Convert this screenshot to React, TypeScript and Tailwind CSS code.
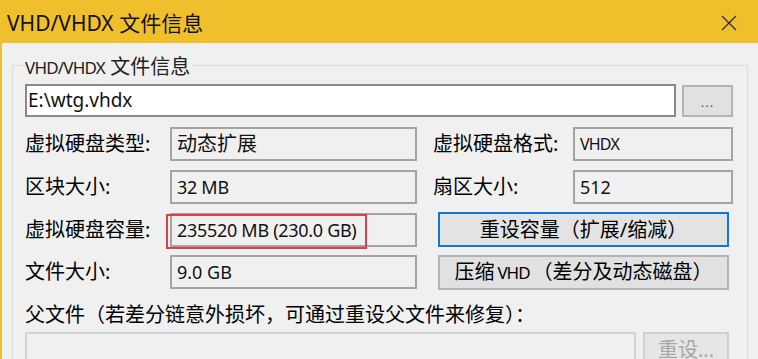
import React from "react";

const font = { fontFamily: '"Noto Sans", "Noto Sans CJK SC", sans-serif' };

function Box({ text, w, className = "" }: { text: string; w: string; className?: string }) {
  return (
    <div
      className={`${w} h-[34px] border-2 border-[#a3a3a3] bg-[#f0f0f0] flex items-center pl-[5px] text-[#111] leading-none ${className}`}
    >
      {text}
    </div>
  );
}

function Label({ text, w }: { text: string; w: string }) {
  return <div className={`${w} text-[20px] leading-[28px] text-[#000] whitespace-nowrap`}>{text}</div>;
}

export default function App() {
  return (
    <div className="w-[758px] h-[359px] overflow-hidden bg-[#f0f0f0] flex flex-col" style={font}>
      <div className="h-[43px] shrink-0 bg-[#efc02b] flex items-center justify-between pl-[7px] pr-[21px] pt-[3px]">
        <span className="text-[21px] leading-none text-[#111]">VHD/VHDX 文件信息</span>
        <svg width="16" height="16" viewBox="0 0 16 16">
          <path d="M1 1 L15 15 M15 1 L1 15" stroke="#2a2a2a" strokeWidth="1.2" fill="none" />
        </svg>
      </div>
      <div className="flex-1 border-l-2 border-[#efc02b] pl-[10px] pt-[22px]">
        <div className="relative border border-[#dcdcdc] w-[736px] h-[320px] pt-[18px] pl-[12px]">
          <div className="absolute -top-[13px] left-[10px] px-[2px] bg-[#f0f0f0] text-[20px] leading-[28px] text-[#222] whitespace-nowrap">
            <span className="text-[17px] tracking-[-0.8px]">VHD/VHDX</span> 文件信息
          </div>
          {/* path row */}
          <div className="flex items-start">
            <div className="w-[651px] h-[33px] border-2 border-[#8a8a8a] bg-white flex items-center pl-[1px] text-[19px] text-[#111] leading-none">
              E:\wtg.vhdx
            </div>
            <div className="ml-[6px] mt-[1px] w-[51px] h-[32px] border-2 border-[#b4b4b4] bg-[#e1e1e1] flex items-end justify-center pb-[6px] text-[13px] leading-none text-[#555] tracking-[1px]">
              ...
            </div>
          </div>
          {/* row 1 */}
          <div className="flex items-center h-[34px] mt-[10px]">
            <Label text="虚拟硬盘类型:" w="w-[145px]" />
            <Box text="动态扩展" w="w-[247px]" className="text-[20px]" />
            <div className="w-[16px]" />
            <Label text="虚拟硬盘格式:" w="w-[140px]" />
            <Box text="VHDX" w="w-[160px]" className="text-[16px] tracking-[-0.8px]" />
          </div>
          {/* row 2 */}
          <div className="flex items-center h-[34px] mt-[9px]">
            <Label text="区块大小:" w="w-[145px]" />
            <Box text="32 MB" w="w-[247px]" className="text-[18px] tracking-[-0.3px]" />
            <div className="w-[16px]" />
            <Label text="扇区大小:" w="w-[140px]" />
            <Box text="512" w="w-[160px]" className="text-[18px]" />
          </div>
          {/* row 3 */}
          <div className="flex items-center h-[34px] mt-[9px]">
            <Label text="虚拟硬盘容量:" w="w-[145px]" />
            <div className="relative">
              <Box text="235520 MB (230.0 GB)" w="w-[247px]" className="text-[18px] tracking-[-0.3px]" />
              <div className="absolute -left-[4px] top-[1px] w-[201px] h-[35px] border-2 border-[#db4146]" />
            </div>
            <div className="w-[21px]" />
            <div className="w-[291px] h-[35px] -mt-[1px] border-2 border-[#0f78d4] bg-[#e3e3e3] flex items-center justify-center text-[20px] leading-none text-[#000]">
              重设容量（扩展/缩减）
            </div>
          </div>
          {/* row 4 */}
          <div className="flex items-center h-[34px] mt-[8px]">
            <Label text="文件大小:" w="w-[145px]" />
            <Box text="9.0 GB" w="w-[247px]" className="text-[18px]" />
            <div className="w-[21px]" />
            <div className="w-[291px] h-[35px] border-2 border-[#b4b4b4] bg-[#e1e1e1] flex items-center justify-center text-[20px] leading-none text-[#000]">
              压缩 <span className="text-[17px] tracking-[-1px] mx-[3px]">VHD</span>（差分及动态磁盘）
            </div>
          </div>
          {/* parent label */}
          <div className="mt-[12px] text-[20px] leading-[28px] text-[#000] whitespace-nowrap">
            父文件（若差分链意外损坏，可通过重设父文件来修复）：
          </div>
          {/* parent row */}
          <div className="flex items-start mt-[3px]">
            <div className="w-[611px] h-[34px] border-2 border-[#d4d4d4] bg-[#f0f0f0]" />
            <div className="ml-[7px] w-[86px] h-[34px] border-2 border-[#cfcfcf] bg-[#e6e6e6] flex items-start justify-center text-[20px] leading-none text-[#a6a6a6] pt-[6px]">
              重设...
            </div>
          </div>
        </div>
      </div>
    </div>
  );
}
